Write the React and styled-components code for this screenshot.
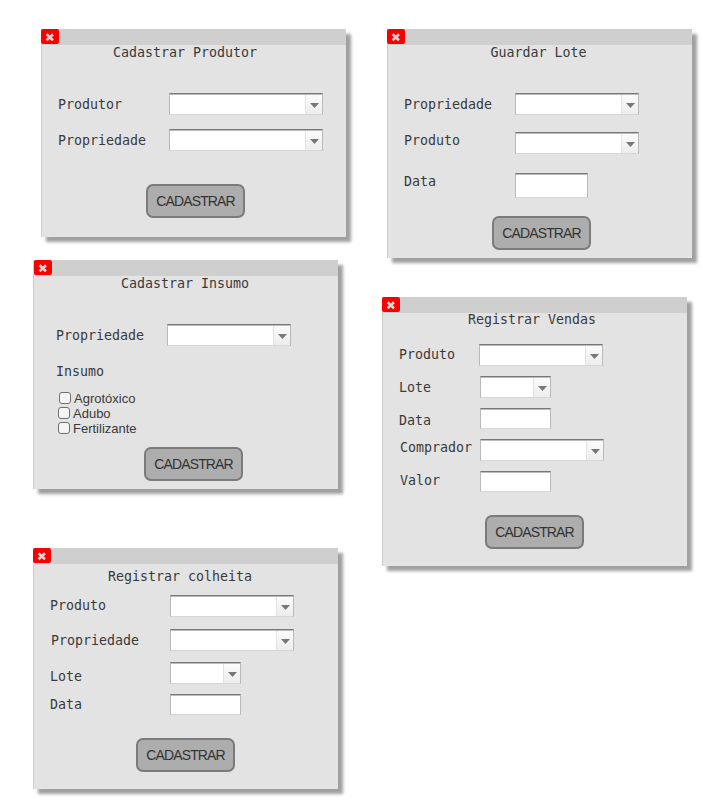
import React from "react";
import styled, { createGlobalStyle } from "styled-components";

const GlobalStyle = createGlobalStyle`
  * { box-sizing: border-box; }
  body { margin: 0; background: #fff; color: #3a3a3a; }
`;

const Page = styled.main`
  display: flex;
  width: 703px;
  height: 800px;
  padding: 29px 0 0 33px;
  overflow: hidden;
`;

const Column = styled.div`
  display: flex;
  flex-direction: column;
  flex: none;
  width: ${(p) => p.$width}px;
`;

const Window = styled.section`
  display: flex;
  flex-direction: column;
  flex: none;
  width: 305px;
  height: ${(p) => p.$height}px;
  margin-top: ${(p) => p.$gap}px;
  margin-left: ${(p) => p.$indent}px;
  background: #e3e3e3;
  box-shadow: inset 1px 0 #cbcbcb, 5px 5px 3px #a0a0a0;
`;

const TitleBar = styled.header`
  flex: none;
  height: 16px;
  padding-left: ${(p) => p.$inset}px;
  background: #cfcfcf;
`;

const CloseButton = styled.button`
  display: flex;
  align-items: center;
  justify-content: center;
  width: 18px;
  height: 15px;
  padding: 0;
  border: 0;
  border-radius: 2px;
  background: #fa0000;
`;

const Title = styled.h2`
  flex: none;
  height: 16px;
  margin: ${(p) => p.$top}px 0 0 ${(p) => p.$left}px;
  font: 400 13.29px/18px "DejaVu Sans Mono", monospace;
  white-space: pre;
`;

const Row = styled.div`
  display: flex;
  align-items: flex-start;
  flex: none;
  height: ${(p) => p.$height}px;
  margin-top: ${(p) => p.$gap}px;
  padding-left: ${(p) => p.$left}px;
`;

const Label = styled.label`
  flex: none;
  width: ${(p) => p.$width}px;
  margin-top: ${(p) => p.$drop}px;
  font: 13.29px/18px "DejaVu Sans Mono", monospace;
`;

const Field = styled.div`
  display: flex;
  justify-content: flex-end;
  flex: none;
  width: ${(p) => p.$width}px;
  height: 100%;
  border: 1px solid #b8b8b8;
  border-top-color: #777;
  border-bottom-color: #d6d6d6;
  background: #fff;
  box-shadow: inset 0 1px #bcbcbc;
`;

const DropButton = styled.span`
  display: flex;
  align-items: center;
  justify-content: center;
  width: 17px;
  margin-top: 1px;
  padding-top: 2px;
  border-left: 1px solid #e2e2e2;
  background: linear-gradient(#fbfbfb, #ededed);
`;

const CheckList = styled.div`
  display: flex;
  flex-direction: column;
  flex: none;
  margin: 12px 0 0 25px;
`;

const CheckItem = styled.label`
  display: flex;
  align-items: flex-start;
  gap: 3px;
  height: 15px;
  padding-left: ${(p) => p.$shift}px;
  font: 13px/15px "Liberation Sans", Arial, sans-serif;
`;

const CheckBox = styled.span`
  width: 12px;
  height: 12px;
  margin-top: 1px;
  border: 1px solid #707070;
  border-radius: 3px;
  background: #f5f5f5;
`;

const SubmitButton = styled.button`
  flex: none;
  width: 99px;
  height: 34px;
  margin: ${(p) => p.$gap}px 0 0 ${(p) => p.$left}px;
  padding: 0;
  border: 2px solid #7b7b7b;
  border-radius: 7px;
  background: #adadad;
  color: #333;
  font: 14px/30px "Liberation Sans", Arial, sans-serif;
  letter-spacing: -0.85px;
`;

const columns = [
  {
    width: 349,
    windows: [
      {
        title: "Cadastrar Produtor", gap: 0, indent: 8, height: 208, titleTop: -1, titleLeft: 72,
        rows: [
          { label: "Produtor", gap: 33, left: 17, labelWidth: 111, drop: 3, width: 154, select: true },
          { label: "Propriedade", gap: 14, left: 17, labelWidth: 111, drop: 3, width: 154, select: true },
        ],
        submit: { gap: 33, left: 105 },
      },
      {
        title: "Cadastrar Insumo", gap: 23, indent: 0, closeInset: 1, height: 229, titleTop: -1, titleLeft: 88,
        rows: [
          { label: "Propriedade", gap: 33, left: 23, labelWidth: 111, drop: 3, width: 124, select: true },
          { label: "Insumo", gap: 17, left: 23, labelWidth: 111, drop: 0, height: 16 },
        ],
        checks: [
          { text: "Agrotóxico", shift: 1 },
          { text: "Adubo", shift: 0 },
          { text: "Fertilizante", shift: 0 },
        ],
        submit: { gap: 11, left: 111 },
      },
      {
        title: "Registrar colheita", gap: 59, indent: 0, height: 241, titleTop: 4, titleLeft: 75,
        rows: [
          { label: "Produto", gap: 11, left: 17, labelWidth: 120, drop: 2, width: 124, select: true },
          { label: "Propriedade", gap: 12, left: 18, labelWidth: 119, drop: 3, width: 124, select: true },
          { label: "Lote", gap: 11, left: 17, labelWidth: 120, drop: 6, width: 71, select: true },
          { label: "Data", gap: 10, left: 17, labelWidth: 120, drop: 2, width: 71, height: 21 },
        ],
        submit: { gap: 23, left: 103 },
      },
    ],
  },
  {
    width: 321,
    windows: [
      {
        title: "Guardar Lote", gap: 0, indent: 5, height: 229, titleTop: -1, titleLeft: 103.5,
        rows: [
          { label: "Propriedade", gap: 33, left: 17, labelWidth: 111, drop: 3, width: 124, select: true },
          { label: "Produto", gap: 17, left: 17, labelWidth: 111, drop: 0, width: 124, select: true },
          { label: "Data", gap: 19, left: 17, labelWidth: 111, drop: 0, width: 73, height: 25 },
        ],
        submit: { gap: 18, left: 105 },
      },
      {
        title: "Registrar Vendas", gap: 39, indent: 0, height: 269, titleTop: -2, titleLeft: 86,
        rows: [
          { label: "Produto", gap: 17, left: 17, labelWidth: 80, drop: 2, width: 124, select: true },
          { label: "Lote", gap: 10, left: 17, labelWidth: 81, drop: 3, width: 71, select: true },
          { label: "Data", gap: 10, left: 17, labelWidth: 81, drop: 4, width: 71, height: 21 },
          { label: "Comprador", gap: 10, left: 18, labelWidth: 80, drop: 0, width: 124, select: true },
          { label: "Valor", gap: 10, left: 18, labelWidth: 80, drop: 1, width: 71, height: 21 },
        ],
        submit: { gap: 23, left: 103 },
      },
    ],
  },
];

function CloseIcon() {
  return (
    <svg width="10" height="10" viewBox="0 0 10 10">
      <path d="M1.6 2.2 L8 8.2 M8 2.2 L1.6 8.2" stroke="#e3d3d3" strokeWidth="2.6" fill="none" />
    </svg>
  );
}

function ArrowIcon() {
  return (
    <svg width="9" height="5" viewBox="0 0 9 5">
      <path d="M0 0 H9 L4.5 5 Z" fill="#777" />
    </svg>
  );
}

function FormWindow({ data }) {
  return (
    <Window $height={data.height} $gap={data.gap} $indent={data.indent}>
      <TitleBar $inset={data.closeInset || 0}>
        <CloseButton aria-label="Fechar">
          <CloseIcon />
        </CloseButton>
      </TitleBar>
      <Title $top={data.titleTop} $left={data.titleLeft}>{data.title}</Title>
      {data.rows.map((row) => (
        <Row key={row.label} $gap={row.gap} $left={row.left} $height={row.height || 22}>
          <Label $width={row.labelWidth} $drop={row.drop}>{row.label}</Label>
          {row.width && (
            <Field $width={row.width}>
              {row.select && (
                <DropButton>
                  <ArrowIcon />
                </DropButton>
              )}
            </Field>
          )}
        </Row>
      ))}
      {data.checks && (
        <CheckList>
          {data.checks.map((item) => (
            <CheckItem key={item.text} $shift={item.shift}>
              <CheckBox />
              {item.text}
            </CheckItem>
          ))}
        </CheckList>
      )}
      <SubmitButton $gap={data.submit.gap} $left={data.submit.left}>CADASTRAR</SubmitButton>
    </Window>
  );
}

export default function App() {
  return (
    <>
      <GlobalStyle />
      <Page>
        {columns.map((column) => (
          <Column key={column.width} $width={column.width}>
            {column.windows.map((item) => (
              <FormWindow key={item.title} data={item} />
            ))}
          </Column>
        ))}
      </Page>
    </>
  );
}
